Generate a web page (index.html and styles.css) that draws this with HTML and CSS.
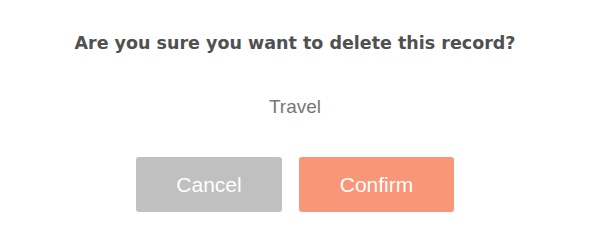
FILE: index.html
```html
<!DOCTYPE html>
<html>
<head>
<meta charset="utf-8">
<link rel="stylesheet" href="styles.css">
</head>
<body>
<div class="dialog">
  <h2 class="title">Are you sure you want to delete this record?</h2>
  <p class="record">Travel</p>
  <div class="actions">
    <button class="btn btn-cancel">Cancel</button>
    <button class="btn btn-confirm">Confirm</button>
  </div>
</div>
</body>
</html>
```
FILE: styles.css
```css
html, body {
  margin: 0;
  padding: 0;
  background: #ffffff;
}
.dialog {
  width: 592px;
  height: 240px;
  box-sizing: border-box;
  padding-top: 31px;
  padding-right: 2px;
  display: flex;
  flex-direction: column;
  align-items: center;
}
.title {
  margin: 0;
  font-family: "DejaVu Sans", "Liberation Sans", sans-serif;
  font-weight: 700;
  font-size: 17.5px;
  line-height: 24px;
  color: #505050;
}
.record {
  margin: 40px 0 0 0;
  font-family: "Liberation Sans", Arial, sans-serif;
  font-size: 19px;
  line-height: 24px;
  color: #777777;
}
.actions {
  margin-top: 38px;
  display: flex;
  gap: 17px;
}
.btn {
  border: none;
  border-radius: 3px;
  height: 55px;
  font-family: "Liberation Sans", Arial, sans-serif;
  font-size: 21px;
  color: #ffffff;
  padding: 0;
}
.btn-cancel {
  width: 146px;
  background: #c0c0c0;
}
.btn-confirm {
  width: 155px;
  background: #fa9678;
}
```
